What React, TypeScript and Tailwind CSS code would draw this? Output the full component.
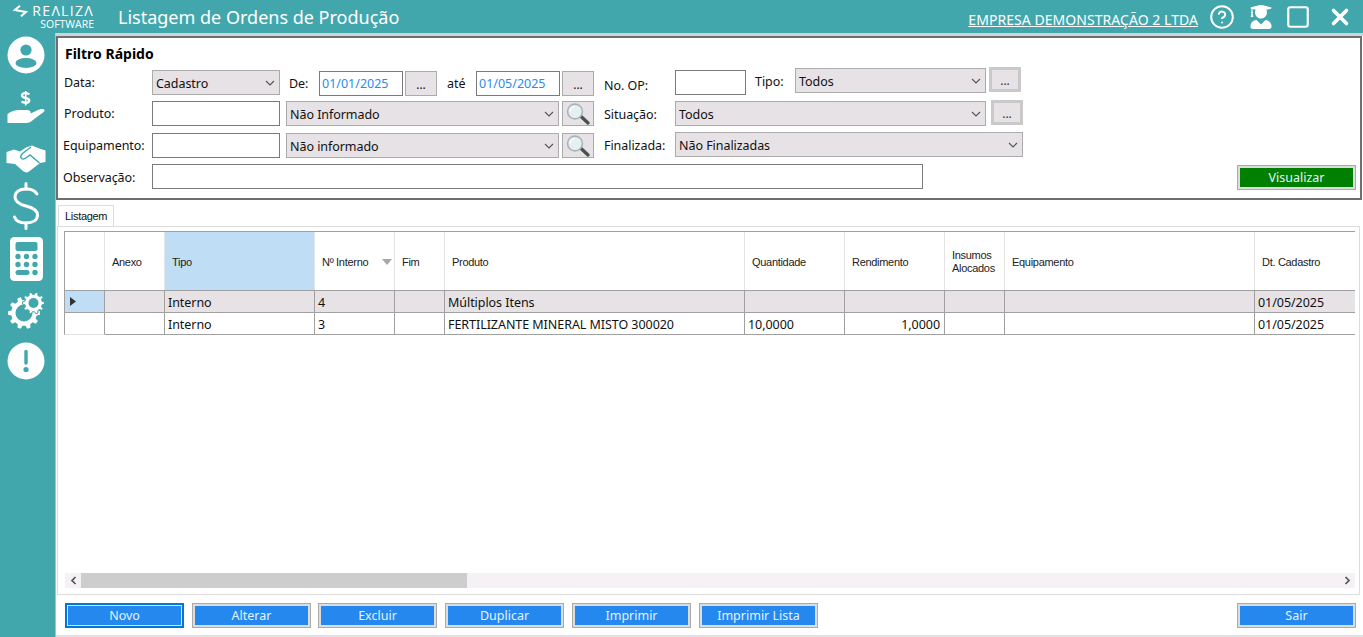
import { CircleHelp, Square, X } from 'lucide-react';
import { FaUserGraduate } from 'react-icons/fa';

const uiFont = "font-['Noto_Sans',sans-serif]";

function gearPath(cx: number, cy: number, r: number, teeth: number) {
  const pts: string[] = [];
  const step = (Math.PI * 2) / teeth;
  for (let i = 0; i < teeth; i++) {
    const a = i * step;
    const corners: [number, number][] = [
      [a - step * 0.3, r * 0.8],
      [a - step * 0.17, r],
      [a + step * 0.17, r],
      [a + step * 0.3, r * 0.8],
    ];
    corners.forEach(([t, d]) => pts.push(`${(cx + Math.cos(t) * d).toFixed(2)} ${(cy + Math.sin(t) * d).toFixed(2)}`));
  }
  return `M${pts.join('L')}Z`;
}

function UserIcon() {
  return (
    <svg width="38" height="38" viewBox="0 0 38 38">
      <circle cx="19" cy="19" r="18.5" fill="#fff" />
      <circle cx="19" cy="14" r="5.6" fill="#42a7ad" />
      <ellipse cx="19" cy="27" rx="10.5" ry="5" fill="#42a7ad" />
    </svg>
  );
}

function HandIcon() {
  return (
    <svg width="38" height="33" viewBox="0 0 38 33">
      <path d="M18.7 0V14.5" stroke="#fff" strokeWidth="1.6" />
      <path d="M22.3 3.4C20.6 1.8 15.3 1.4 15 4.4C14.7 7.8 22.4 6 22.2 9.6C22 12.4 16.5 12.1 14.6 10.4" fill="none" stroke="#fff" strokeWidth="2.4" />
      <path d="M0.5 23C4 20.5 8 19 12 19L20 19C23 19 24 20.5 23.5 22.5L30 19.5C33 18 36.5 17.5 37.5 19C38 20.5 35.5 22 32.5 24L26 29C24 31 22 32 19 32L0.5 32Z" fill="#fff" />
    </svg>
  );
}

function HandshakeIcon() {
  return (
    <svg width="40" height="28" viewBox="0 0 40 28">
      <path d="M0.5 7L8 4.5L14 6.5L20 2.5L26 0.5L32 3L39.5 5.5V17L34 18L23 26.5Q20 28.5 17 26L9 19L0.5 18Z" fill="#fff" />
      <path d="M25 2L16.5 8.5Q13.5 11.5 15.5 13.5Q17.5 15 20.5 12.5L24 10L33.5 18" fill="none" stroke="#42a7ad" strokeWidth="1.5" />
    </svg>
  );
}

function DollarIcon() {
  return (
    <svg width="28" height="48" viewBox="0 0 28 48" fill="none" stroke="#fff" strokeWidth="3" strokeLinecap="round">
      <path d="M14 1.5V7M14 41V46.5" />
      <path d="M25 12C23 8.5 19 7 14 7C7 7 3 10 3 15C3 20.5 8 22.5 14 24C20 25.5 25.5 27.5 25.5 33C25.5 38 21 41 14 41C8 41 4 39 2.5 35" />
    </svg>
  );
}

function CalculatorIcon() {
  return (
    <svg width="33" height="44" viewBox="0 0 33 44">
      <rect width="33" height="44" rx="4.5" fill="#fff" />
      <rect x="5.5" y="5" width="22" height="9" rx="2" fill="#42a7ad" />
      {[8, 16.5, 25].map((cx) => (
        <circle key={`a${cx}`} cx={cx} cy="19.5" r="2.7" fill="#42a7ad" />
      ))}
      {[8, 16.5, 25].map((cx) => (
        <circle key={`b${cx}`} cx={cx} cy="27.5" r="2.7" fill="#42a7ad" />
      ))}
      <rect x="5.5" y="33" width="14" height="5" rx="2.5" fill="#42a7ad" />
      <circle cx="25" cy="35.5" r="2.7" fill="#42a7ad" />
    </svg>
  );
}

function CogsIcon() {
  return (
    <svg width="36" height="36" viewBox="0 0 36 36">
      <path d={gearPath(16, 20, 16, 10)} fill="#fff" />
      <circle cx="16" cy="20" r="8.5" fill="#42a7ad" />
      <path d={gearPath(25.5, 10, 11, 10)} fill="#fff" stroke="#42a7ad" strokeWidth="1" />
      <circle cx="25.5" cy="10" r="5" fill="#42a7ad" />
    </svg>
  );
}

function AlertIcon() {
  return (
    <svg width="38" height="38" viewBox="0 0 38 38">
      <circle cx="19" cy="19" r="18.5" fill="#fff" />
      <path d="M19 9.5V21" stroke="#42a7ad" strokeWidth="3.4" strokeLinecap="round" />
      <circle cx="19" cy="27.5" r="2.6" fill="#42a7ad" />
    </svg>
  );
}

function Logo() {
  return (
    <div className="flex w-[79px] flex-col items-end font-['Open_Sans',sans-serif] leading-none text-white">
      <div className="flex items-center gap-[4px]">
        <svg width="15" height="12" viewBox="0 0 15 12" fill="none" stroke="#fff" strokeWidth="2">
          <path d="M7 0.8L1.8 5L13 7L8 11.3" />
        </svg>
        <span className="text-[14px] tracking-[1.3px]">REΛLIZΛ</span>
      </div>
      <span className="mt-[1px] text-[10.5px]">SOFTWARE</span>
    </div>
  );
}

function Chevron() {
  return (
    <svg width="10" height="6" viewBox="0 0 10 6" fill="none" stroke="#555" strokeWidth="1.1" className="shrink-0">
      <path d="M1 1L5 5L9 1" />
    </svg>
  );
}

function Label({ text, className }: { text: string; className: string }) {
  return <div className={`flex h-[25px] shrink-0 items-center pt-[3px] text-[12.5px] tracking-[-0.05px] text-[#111] ${className}`}>{text}</div>;
}

function Input({ value, className }: { value?: string; className: string }) {
  return (
    <div className={`flex h-[25px] shrink-0 items-center border border-[#7a7a7a] bg-white pl-[2px] pt-[2px] text-[12.5px] text-[#2a8cf0] ${className}`}>
      {value}
    </div>
  );
}

function Select({ value, className }: { value: string; className: string }) {
  return (
    <div className={`flex h-[25px] shrink-0 items-center justify-between border border-[#ababab] bg-[#e6e2e6] pl-[3px] pr-[4px] text-[12.5px] tracking-[-0.05px] text-[#111] ${className}`}>
      <span className="pt-[3px]">{value}</span>
      <Chevron />
    </div>
  );
}

function DotsButton({ className }: { className: string }) {
  return (
    <div className={`flex h-[25px] w-[32px] shrink-0 items-center justify-center border border-[#ababab] bg-[#e6e2e6] pt-[3px] text-[12px] text-[#111] ${className}`}>
      ...
    </div>
  );
}

function DotsButtonThick({ className }: { className: string }) {
  return (
    <div className={`flex h-[25px] w-[32px] shrink-0 items-center justify-center border-[3px] border-[#c9c9c9] bg-[#e6e2e6] pt-[3px] text-[12px] text-[#333] ${className}`}>
      ...
    </div>
  );
}

function SearchButton({ className }: { className: string }) {
  return (
    <div className={`flex h-[25px] w-[32px] shrink-0 items-center justify-center border border-[#ababab] bg-[#e6e2e6] ${className}`}>
      <svg width="26" height="22" viewBox="0 0 26 22">
        <path d="M15 12.5L23 20" stroke="#4a4f50" strokeWidth="3.2" strokeLinecap="round" />
        <circle cx="10" cy="8.5" r="7.4" fill="#e4f0f2" stroke="#a9b4b6" strokeWidth="1.6" />
        <path d="M5 8.5C5 6 7 4 9.5 3.8" fill="none" stroke="#f7fbfc" strokeWidth="1.6" />
      </svg>
    </div>
  );
}

function ActionButton({ text, className = '' }: { text: string; className?: string }) {
  return (
    <div className={`flex h-[25px] w-[119px] shrink-0 items-center justify-center bg-[#2488ef] pt-px text-[12.5px] text-[#e4f2ff] shadow-[inset_0_0_0_1px_#aaa,inset_0_0_0_3px_#ddd] ${className}`}>
      {text}
    </div>
  );
}

const colWidths = [
  'w-[60px]',
  'w-[150px]',
  'w-[80px]',
  'w-[50px]',
  'w-[300px]',
  'w-[100px]',
  'w-[100px]',
  'w-[60px]',
  'w-[250px]',
  'flex-1',
];

const headers = ['Anexo', 'Tipo', 'Nº Interno', 'Fim', 'Produto', 'Quantidade', 'Rendimento', 'Insumos Alocados', 'Equipamento', 'Dt. Cadastro'];

const rows = [
  ['', 'Interno', '4', '', 'Múltiplos Itens', '', '', '', '', '01/05/2025'],
  ['', 'Interno', '3', '', 'FERTILIZANTE MINERAL MISTO 300020', '10,0000', '1,0000', '', '', '01/05/2025'],
];

function Grid() {
  return (
    <div className="ml-[6px] mr-[4px] flex-1">
      <div className="flex h-[60px] border-y border-[#a0a0a0]">
        <div className="w-[41px] shrink-0 border-x border-l-[#a0a0a0] border-r-[#e3e3e3]" />
        {headers.map((h, i) => (
          <div
            key={h}
            className={`flex shrink-0 items-center justify-between border-r border-[#e3e3e3] pt-[2px] font-['Liberation_Sans',sans-serif] text-[11px] leading-[13px] tracking-[-0.3px] text-[#222] ${colWidths[i]} ${i === 1 ? 'bg-[#bfdef5] pl-[7px] border-[#bfdef5]' : 'pl-[7px]'} ${i === 9 ? 'border-r-0' : ''}`}
          >
            <span className={i === 7 ? 'w-[50px]' : ''}>{h}</span>
            {i === 2 && (
              <svg width="10" height="6" viewBox="0 0 10 6" className="mr-[2px]">
                <path d="M0 0H10L5 6Z" fill="#a8a8a8" />
              </svg>
            )}
          </div>
        ))}
      </div>
      {rows.map((row, r) => (
        <div key={r} className={`flex h-[22px] text-[12.5px] tracking-[-0.05px] text-[#111] ${r === 0 ? 'bg-[#e6e2e6]' : 'bg-white'}`}>
          <div className={`flex w-[41px] shrink-0 items-center border-x border-b border-l-[#a0a0a0] border-r-[#a0a0a0] pl-[5px] ${r === 0 ? 'border-b-[#a0a0a0] bg-[#bfdef5]' : 'border-b-[#e3e3e3] bg-white'}`}>
            {r === 0 && (
              <svg width="6" height="9" viewBox="0 0 6 9">
                <path d="M0 0L6 4.5L0 9Z" fill="#333" />
              </svg>
            )}
          </div>
          {row.map((cell, i) => (
            <div
              key={i}
              className={`flex shrink-0 items-center border-b border-r border-[#a0a0a0] px-[3px] pt-[3px] ${colWidths[i]} ${i === 6 ? 'justify-end pr-[4px]' : ''} ${i === 9 ? 'border-r-0' : ''}`}
            >
              {cell}
            </div>
          ))}
        </div>
      ))}
    </div>
  );
}

export default function App() {
  return (
    <div className={`flex h-screen w-full flex-col overflow-hidden bg-[#42a7ad] ${uiFont}`}>
      <header className="flex h-[33px] shrink-0 items-center pl-[15px] text-white">
        <Logo />
        <h1 className="ml-[24px] text-[18px] leading-none">Listagem de Ordens de Produção</h1>
        <a className="ml-auto mt-[6px] text-[14px] tracking-[0.05px] underline">EMPRESA DEMONSTRAÇÃO 2 LTDA</a>
        <CircleHelp size={26} strokeWidth={1.8} className="ml-[11px]" />
        <FaUserGraduate size={24} className="ml-[14px]" />
        <Square size={26} strokeWidth={2} className="ml-[12px]" />
        <X size={26} strokeWidth={3.4} className="ml-[16px] mr-[10px]" />
      </header>

      <div className="flex min-h-0 flex-1">
        <aside className="flex w-[55px] shrink-0 flex-col items-center pr-[3px] text-white">
          <div className="mt-[3px]"><UserIcon /></div>
          <div className="mt-[17px]"><HandIcon /></div>
          <div className="mt-[21px]"><HandshakeIcon /></div>
          <div className="mt-[9px]"><DollarIcon /></div>
          <div className="mt-[7px]"><CalculatorIcon /></div>
          <div className="mt-[12px]"><CogsIcon /></div>
          <div className="mt-[13px]"><AlertIcon /></div>
        </aside>

        <main className="flex min-w-0 flex-1 flex-col border-l border-t-[3px] border-l-[#bbb] border-t-[#cfd4d4] bg-white">
          <section className="mr-[1px] h-[164px] shrink-0 border-2 border-[#6e6e6e]">
            <h2 className="h-[29px] pl-[7px] pt-[6px] text-[14px] font-bold leading-[20px] text-black">Filtro Rápido</h2>

            <div className="flex h-[33px] pl-[6px]">
              <Label text="Data:" className="mt-[2px] w-[88px]" />
              <Select value="Cadastro" className="mt-[3px] w-[128px]" />
              <Label text="De:" className="ml-[9px] mt-[3px] w-[30px]" />
              <Input value="01/01/2025" className="mt-[4px] w-[84px]" />
              <DotsButton className="ml-[2px] mt-[4px]" />
              <Label text="até" className="ml-[10px] mt-[3px] w-[29px]" />
              <Input value="01/05/2025" className="mt-[4px] w-[84px]" />
              <DotsButton className="ml-[2px] mt-[4px]" />
              <Label text="No. OP:" className="ml-[10px] mt-[5px] w-[71px]" />
              <Input className="mt-[3px] w-[71px]" />
              <Label text="Tipo:" className="ml-[9px] mt-[1px] w-[40px]" />
              <Select value="Todos" className="mt-[1px] w-[191px]" />
              <DotsButtonThick className="ml-[3px]" />
            </div>

            <div className="flex h-[32px] pl-[6px]">
              <Label text="Produto:" className="w-[88px]" />
              <Input className="mt-[1px] w-[128px]" />
              <Select value="Não Informado" className="ml-[6px] mt-[1px] w-[273px]" />
              <SearchButton className="ml-[3px] mt-[1px]" />
              <Label text="Situação:" className="ml-[10px] mt-[1px] w-[71px]" />
              <Select value="Todos" className="mt-[1px] w-[311px]" />
              <DotsButtonThick className="ml-[5px]" />
            </div>

            <div className="flex h-[31px] pl-[5px]">
              <Label text="Equipamento:" className="w-[89px]" />
              <Input className="mt-[1px] w-[128px]" />
              <Select value="Não informado" className="ml-[6px] mt-[1px] w-[273px]" />
              <SearchButton className="ml-[3px] mt-[1px]" />
              <Label text="Finalizada:" className="ml-[10px] w-[71px]" />
              <Select value="Não Finalizadas" className="w-[348px]" />
            </div>

            <div className="flex h-[35px] pl-[5px] pr-[4px]">
              <Label text="Observação:" className="mt-px w-[89px]" />
              <Input className="mt-[1px] w-[771px]" />
              <ActionButton text="Visualizar" className="ml-auto mt-[2px] !bg-[#008000]" />
            </div>
          </section>

          <div className="ml-[2px] mr-[3px] flex min-h-0 flex-1 flex-col">
            <div className="mt-[5px] flex h-[21px] shrink-0 items-center justify-center self-start border border-b-0 border-[#dcdcdc] px-[6px] font-['Liberation_Sans',sans-serif] text-[11px] tracking-[-0.3px] text-[#111]">
              Listagem
            </div>
            <div className="-ml-px flex min-h-0 flex-1 flex-col border border-[#dcdcdc] pt-[4px]">
              <Grid />
              <div className="mb-[6px] ml-[7px] mr-[4px] flex h-[15px] shrink-0 items-center bg-[#f5f1f5]">
                <div className="flex w-[16px] shrink-0 justify-center">
                  <svg width="7" height="9" viewBox="0 0 7 9" fill="none" stroke="#555" strokeWidth="1.7"><path d="M5.5 1L2 4.5L5.5 8" /></svg>
                </div>
                <div className="h-full w-[386px] bg-[#cdcdcd]" />
                <div className="ml-auto flex w-[16px] justify-center">
                  <svg width="7" height="9" viewBox="0 0 7 9" fill="none" stroke="#555" strokeWidth="1.7"><path d="M1.5 1L5 4.5L1.5 8" /></svg>
                </div>
              </div>
            </div>
          </div>

          <footer className="flex h-[42px] shrink-0 border-b-2 border-[#e2e2e2] pl-[9px] pr-[7px] pt-[8px]">
            <ActionButton text="Novo" className="shadow-[inset_0_0_0_2px_#0078d7,inset_0_0_0_3px_#cfe6fb]" />
            <ActionButton text="Alterar" className="ml-[8px]" />
            <ActionButton text="Excluir" className="ml-[7px]" />
            <ActionButton text="Duplicar" className="ml-[8px]" />
            <ActionButton text="Imprimir" className="ml-[8px]" />
            <ActionButton text="Imprimir Lista" className="ml-[8px]" />
            <ActionButton text="Sair" className="ml-auto" />
          </footer>
        </main>
      </div>
    </div>
  );
}
